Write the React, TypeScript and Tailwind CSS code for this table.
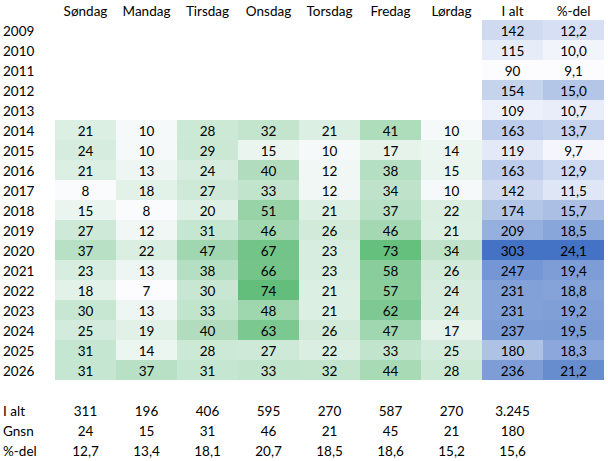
import React from 'react';

const DAYS = ['Søndag', 'Mandag', 'Tirsdag', 'Onsdag', 'Torsdag', 'Fredag', 'Lørdag'];

type Row = { year: string; days: number[] | null; total: number; pct: string };

const ROWS: Row[] = [
  { year: '2009', days: null, total: 142, pct: '12,2' },
  { year: '2010', days: null, total: 115, pct: '10,0' },
  { year: '2011', days: null, total: 90, pct: '9,1' },
  { year: '2012', days: null, total: 154, pct: '15,0' },
  { year: '2013', days: null, total: 109, pct: '10,7' },
  { year: '2014', days: [21, 10, 28, 32, 21, 41, 10], total: 163, pct: '13,7' },
  { year: '2015', days: [24, 10, 29, 15, 10, 17, 14], total: 119, pct: '9,7' },
  { year: '2016', days: [21, 13, 24, 40, 12, 38, 15], total: 163, pct: '12,9' },
  { year: '2017', days: [8, 18, 27, 33, 12, 34, 10], total: 142, pct: '11,5' },
  { year: '2018', days: [15, 8, 20, 51, 21, 37, 22], total: 174, pct: '15,7' },
  { year: '2019', days: [27, 12, 31, 46, 26, 46, 21], total: 209, pct: '18,5' },
  { year: '2020', days: [37, 22, 47, 67, 23, 73, 34], total: 303, pct: '24,1' },
  { year: '2021', days: [23, 13, 38, 66, 23, 58, 26], total: 247, pct: '19,4' },
  { year: '2022', days: [18, 7, 30, 74, 21, 57, 24], total: 231, pct: '18,8' },
  { year: '2023', days: [30, 13, 33, 48, 21, 62, 24], total: 231, pct: '19,2' },
  { year: '2024', days: [25, 19, 40, 63, 26, 47, 17], total: 237, pct: '19,5' },
  { year: '2025', days: [31, 14, 28, 27, 22, 33, 25], total: 180, pct: '18,3' },
  { year: '2026', days: [31, 37, 31, 33, 32, 44, 28], total: 236, pct: '21,2' },
];

const SUMMARY = [
  { label: 'I alt', values: ['311', '196', '406', '595', '270', '587', '270', '3.245'] },
  { label: 'Gnsn', values: ['24', '15', '31', '46', '21', '45', '21', '180'] },
  { label: '%-del', values: ['12,7', '13,4', '18,1', '20,7', '18,5', '18,6', '15,2', '15,6'] },
];

const WHITE = [252, 252, 255];
const GREEN = [99, 190, 123];
const BLUE = [68, 114, 196];

// two-colour scale like Excel's conditional formatting
const scale = (v: number, min: number, max: number, to: number[]) => {
  const t = (v - min) / (max - min);
  const c = WHITE.map((w, i) => Math.round(w + (to[i] - w) * t));
  return `rgb(${c[0]},${c[1]},${c[2]})`;
};

const num = (s: string) => parseFloat(s.replace(',', '.'));

const App: React.FC = () => {
  const cols = 'grid grid-cols-[55px_repeat(9,61px)] h-5 items-center';
  const cell = 'h-5 pt-[3px] flex items-center justify-center';

  return (
    <div className="w-[608px] h-[461px] bg-white text-[13.5px] text-black" style={{ fontFamily: 'Lato, "Liberation Sans", sans-serif' }}>
      <div className={cols}>
        <div />
        {[...DAYS, 'I alt', '%-del'].map((d) => (
          <div key={d} className={cell}>{d}</div>
        ))}
      </div>

      {ROWS.map((r) => (
        <div key={r.year} className={cols}>
          <div className="pl-[3px] pt-[3px] h-5 flex items-center">{r.year}</div>
          {DAYS.map((d, i) =>
            r.days ? (
              <div key={d} className={cell} style={{ backgroundColor: scale(r.days[i], 7, 74, GREEN) }}>
                {r.days[i]}
              </div>
            ) : (
              <div key={d} />
            )
          )}
          <div className={cell} style={{ backgroundColor: scale(r.total, 90, 303, BLUE) }}>{r.total}</div>
          <div className={cell} style={{ backgroundColor: scale(num(r.pct), 9.1, 24.1, BLUE) }}>{r.pct}</div>
        </div>
      ))}

      <div className="h-5" />

      {SUMMARY.map((s) => (
        <div key={s.label} className={cols}>
          <div className="pl-[3px] pt-[3px] h-5 flex items-center">{s.label}</div>
          {s.values.map((v, i) => (
            <div key={i} className={cell}>{v}</div>
          ))}
        </div>
      ))}
    </div>
  );
};

export default App;
